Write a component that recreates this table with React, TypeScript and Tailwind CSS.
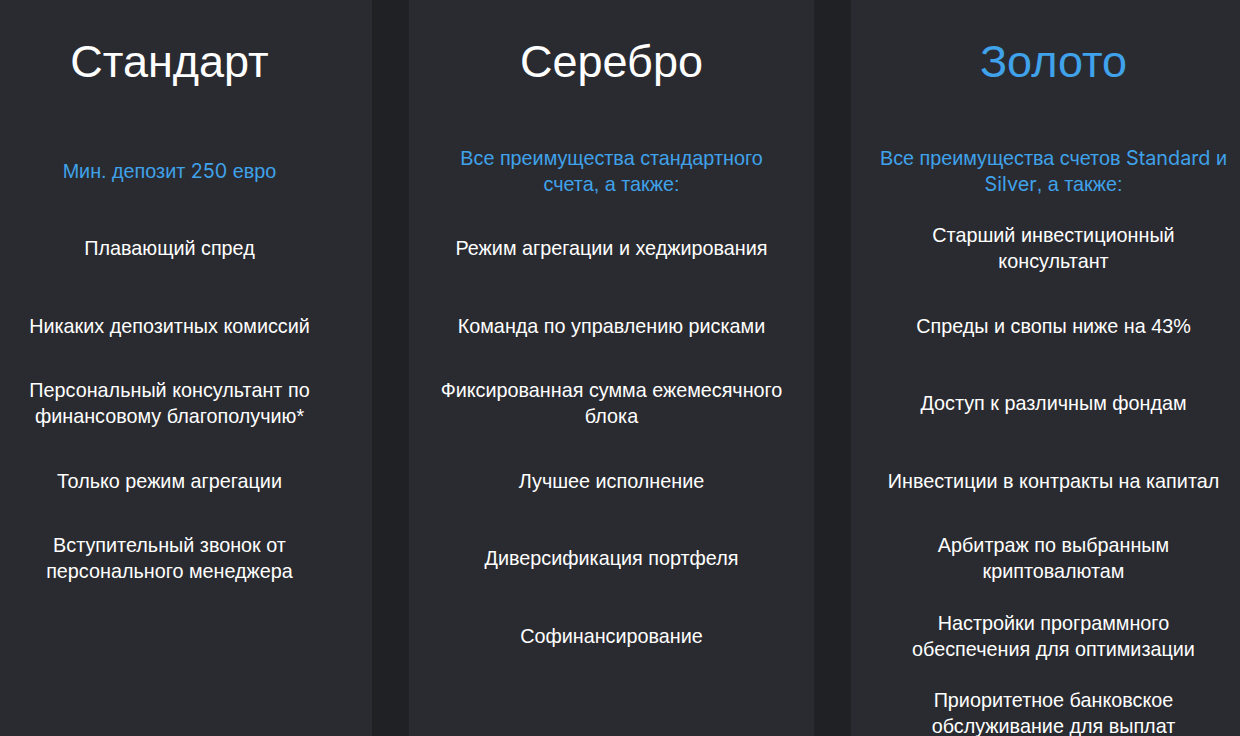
import React from "react";

type Plan = {
  title: string;
  highlight?: boolean;
  intro: React.ReactNode;
  features: string[][];
};

const plans: Plan[] = [
  {
    title: "Стандарт",
    intro: (
      <>
        Мин. депозит <span className="font-['Inter']">250</span> евро
      </>
    ),
    features: [
      ["Плавающий спред"],
      ["Никаких депозитных комиссий"],
      ["Персональный консультант по", "финансовому благополучию*"],
      ["Только режим агрегации"],
      ["Вступительный звонок от", "персонального менеджера"],
    ],
  },
  {
    title: "Серебро",
    intro: (
      <>
        Все преимущества стандартного
        <br />
        счета, а также:
      </>
    ),
    features: [
      ["Режим агрегации и хеджирования"],
      ["Команда по управлению рисками"],
      ["Фиксированная сумма ежемесячного", "блока"],
      ["Лучшее исполнение"],
      ["Диверсификация портфеля"],
      ["Софинансирование"],
    ],
  },
  {
    title: "Золото",
    highlight: true,
    intro: (
      <>
        Все преимущества счетов <span className="font-['Inter']">Standard</span> и
        <br />
        <span className="font-['Inter']">Silver</span>, а также:
      </>
    ),
    features: [
      ["Старший инвестиционный", "консультант"],
      ["Спреды и свопы ниже на 43%"],
      ["Доступ к различным фондам"],
      ["Инвестиции в контракты на капитал"],
      ["Арбитраж по выбранным", "криптовалютам"],
      ["Настройки программного", "обеспечения для оптимизации"],
      ["Приоритетное банковское", "обслуживание для выплат"],
    ],
  },
];

const PlanColumn: React.FC<{ plan: Plan }> = ({ plan }) => (
  <div className="flex w-[405px] shrink-0 flex-col items-center bg-[#2a2b30]">
    <div className="flex h-[124px] items-center">
      <h2
        className={`text-[45px] leading-[48px] font-normal ${
          plan.highlight ? "text-[#3fa2ea]" : "text-white"
        }`}
      >
        {plan.title}
      </h2>
    </div>
    <div className="mt-[8px] flex h-[77.5px] items-center text-center text-[19.8px] leading-[26px] text-[#3fa2ea]">
      <p className="whitespace-nowrap">{plan.intro}</p>
    </div>
    {plan.features.map((lines, i) => (
      <div
        key={i}
        className="flex h-[77.5px] items-center text-center text-[19.8px] leading-[26px] text-white"
      >
        <p className="whitespace-nowrap">
          {lines.map((line, j) => (
            <React.Fragment key={j}>
              {j > 0 && <br />}
              {line}
            </React.Fragment>
          ))}
        </p>
      </div>
    ))}
    <div className="h-[60px]" />
  </div>
);

export default function App() {
  return (
    <div className="h-[736px] w-[1240px] overflow-hidden bg-[#202124] font-['Liberation_Sans',Arial,sans-serif]">
      <div className="ml-[-33px] flex gap-[37px]">
        {plans.map((plan) => (
          <PlanColumn key={plan.title} plan={plan} />
        ))}
      </div>
    </div>
  );
}
